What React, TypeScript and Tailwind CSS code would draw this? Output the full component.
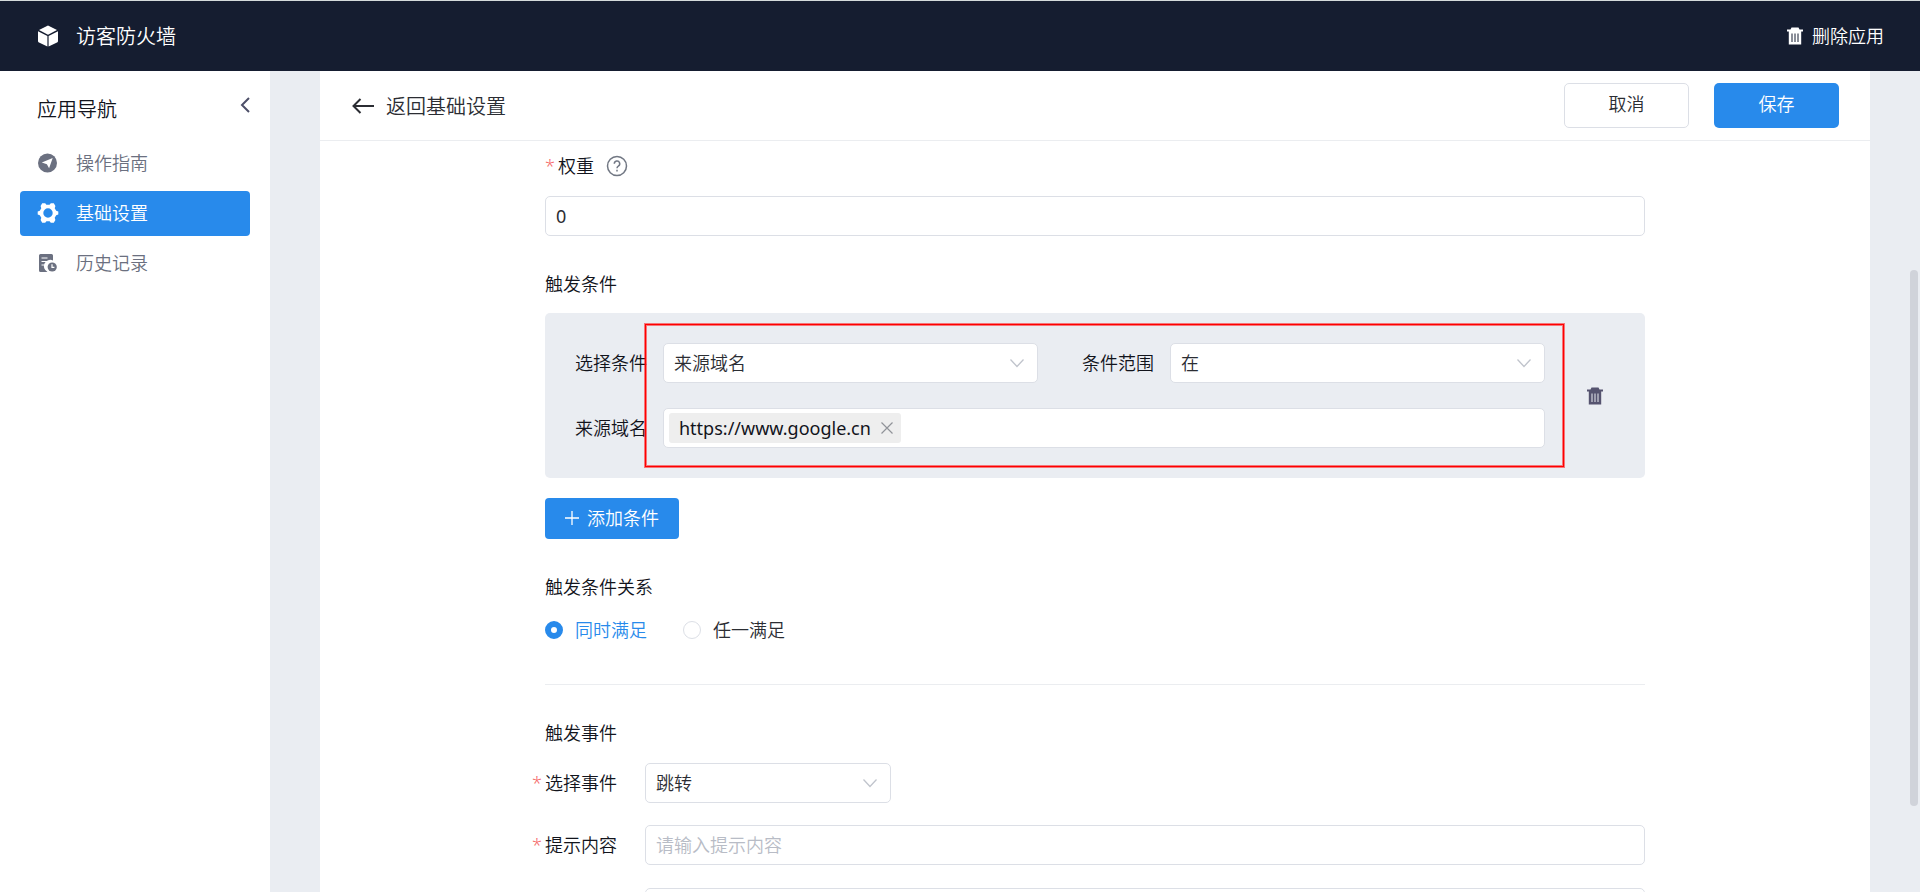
import type { ReactNode, SVGProps } from "react";

function CubeIcon() {
  return (
    <svg viewBox="0 0 20 22" className="h-[22px] w-5" fill="currentColor" aria-hidden="true">
      <path d="M10 0.4 19 5 10 9.7 1 5z" />
      <path d="M0 6.2 9.400 11V21.600L1 17.400Q0 16.900 0 15.900z" />
      <path d="M20 6.2 10.600 11V21.600L19 17.400Q20 16.900 20 15.900z" />
    </svg>
  );
}

function TrashIcon(props: SVGProps<SVGSVGElement>) {
  return (
    <svg viewBox="0 0 18 18" width="18" height="18" aria-hidden="true" {...props}>
      <path fill="currentColor" d="M5.5 0.5h7l1 2H17v2h-1.8V17.5H2.8V4.500H1v-2h3.500z" />
      <path stroke="var(--slot)" strokeWidth="1" d="M6 6.500v8.500M9 6.500v8.500M12 6.500v8.500" />
    </svg>
  );
}

function GuideIcon() {
  return (
    <svg viewBox="0 0 20 20" width="20" height="20" aria-hidden="true">
      <circle cx="10.500" cy="10" r="9.500" fill="currentColor" />
      <path fill="#fff" d="M15.700 4.900 12.100 15.300 9.900 11.200 4.800 9.600z" />
    </svg>
  );
}

function GearIcon() {
  return (
    <svg viewBox="0 0 22 22" width="22" height="22" aria-hidden="true">
      <path
        fill="currentColor"
        fillRule="evenodd"
        d="M5.200 1.200h3l1.200 1.600h3.200l1.200-1.600h3l1.600 2.800-0.700 2.200 1.500 2.500 2.100 0.800v3l-2.100 0.800-1.500 2.500 0.700 2.200-1.600 2.800h-3l-1.200-1.600H9.400l-1.200 1.600h-3l-1.600-2.800 0.700-2.200-1.500-2.500-2.100-0.800v-3l2.100-0.800 1.500-2.500L3.600 4zM11 6.300a4.700 4.700 0 1 0 0 9.400a4.700 4.700 0 0 0 0-9.400z"
      />
    </svg>
  );
}

function HistoryIcon() {
  return (
    <svg viewBox="0 0 20 20" width="20" height="20" aria-hidden="true">
      <path fill="currentColor" d="M3.500 1h11q1.500 0 1.500 1.500V7.500A6 6 0 0 0 10.500 19H3.500Q2 19 2 17.500v-15Q2 1 3.500 1z" />
      <path stroke="#fff" strokeWidth="1.200" d="M4.500 5h6M4.500 8.500h8M4.500 12h4" />
      <circle cx="15.200" cy="14" r="4.600" fill="currentColor" />
      <path stroke="#fff" strokeWidth="1.200" fill="none" d="M15 11.200v3.200h2.400" />
    </svg>
  );
}

function Chevron() {
  return (
    <svg
      viewBox="0 0 16 10"
      className="pointer-events-none col-start-1 row-start-1 mr-[13px] h-2.5 w-4 self-center justify-self-end"
      fill="none"
      stroke="#c0c4cc"
      strokeWidth="1.300"
      aria-hidden="true"
    >
      <path d="M1.500 1.500 8 8.500l6.500-7" />
    </svg>
  );
}

function SelectBox({ id, value, className }: { id: string; value: string; className: string }) {
  return (
    <div className={`grid ${className}`}>
      <select
        id={id}
        defaultValue={value}
        className="col-start-1 row-start-1 h-10 w-full appearance-none rounded-[5px] border border-[#dcdfe6] bg-white px-2.5 text-[#2b2d33] outline-none"
      >
        <option>{value}</option>
      </select>
      <Chevron />
    </div>
  );
}

function NavItem({ icon, label, active }: { icon: ReactNode; label: string; active?: boolean }) {
  return (
    <a
      href="#"
      className={
        active
          ? "flex h-[45px] items-center rounded-[4px] bg-[#288aeb] pl-[17px] pb-0.5 text-white"
          : "flex h-[45px] items-center rounded-[4px] pl-[17px] pb-0.5 text-[#6b7080]"
      }
    >
      <span className="w-[39px]">{icon}</span>
      {label}
    </a>
  );
}

function Star() {
  return <span className="w-[13px] shrink-0 text-[#f56c6c]">*</span>;
}

export default function App() {
  return (
    <div className="flex h-screen flex-col overflow-hidden bg-[#eaedf2] font-['Noto_Sans','Noto_Sans_CJK_SC',sans-serif] text-[18px] leading-6 font-[350] text-[#12141c]">
      <header className="flex h-[71px] shrink-0 items-center border-t border-[#d5dbdb] bg-[#151d30] pr-9 pl-[38px] text-white">
        <CubeIcon />
        <h1 className="ml-[18px] pt-0.5 text-[20px] font-[350]">访客防火墙</h1>
        <button type="button" className="ml-auto flex items-center gap-2">
          <TrashIcon className="[--slot:#151d30]" />
          删除应用
        </button>
      </header>

      <div className="flex min-h-0 flex-1">
        <aside className="w-[270px] shrink-0 bg-white px-5">
          <div className="flex h-[70px] items-center justify-between pt-1 pl-[17px]">
            <h2 className="pt-[3px] text-[20px] font-[350]">应用导航</h2>
            <button type="button" aria-label="收起" className="pb-1.5">
              <svg viewBox="0 0 10 16" width="10" height="16" fill="none" stroke="#4d4f68" strokeWidth="2" aria-hidden="true">
                <path d="M9 1 2 8l7 7" />
              </svg>
            </button>
          </div>
          <nav className="flex flex-col gap-[5px]">
            <NavItem icon={<GuideIcon />} label="操作指南" />
            <NavItem icon={<GearIcon />} label="基础设置" active />
            <NavItem icon={<HistoryIcon />} label="历史记录" />
          </nav>
        </aside>

        <main className="mr-[50px] ml-[50px] flex min-w-0 flex-1 flex-col bg-white">
          <div className="flex h-[70px] shrink-0 items-center border-b border-[#ebedf0] pr-[31px] pl-8">
            <a href="#" className="flex items-center gap-3 text-[20px] text-[#2b2d33]">
              <svg viewBox="0 0 22 16" width="22" height="16" fill="none" stroke="currentColor" strokeWidth="2" aria-hidden="true">
                <path d="M8.500 1 1.500 8l7 7M1.500 8H22" />
              </svg>
              <span className="pt-0.5">返回基础设置</span>
            </a>
            <div className="ml-auto flex gap-[25px]">
              <button type="button" className="h-[45px] w-[125px] rounded-[5px] border border-[#dcdfe6] bg-white pb-1 text-[#2b2d33]">
                取消
              </button>
              <button type="button" className="h-[45px] w-[125px] rounded-[5px] bg-[#288aeb] pb-1 text-white">
                保存
              </button>
            </div>
          </div>

          <div className="min-h-0 flex-1 overflow-hidden">
            <form className="mx-auto max-w-[1100px] pt-[13px]">
              <div className="flex h-6 items-center">
                <Star />
                <label htmlFor="weight">权重</label>
                <svg viewBox="0 0 22 22" width="22" height="22" className="ml-3" fill="none" stroke="#717783" strokeWidth="1.500" aria-hidden="true">
                  <circle cx="11" cy="11" r="9.500" />
                  <path d="M8.300 8.800a2.700 2.700 0 1 1 4 2.300q-1.300 0.700-1.300 2.200M11 14.800v1.700" />
                </svg>
              </div>
              <input
                id="weight"
                defaultValue="0"
                className="mt-[18px] block h-10 w-full rounded-[5px] border border-[#dcdfe6] px-2.5 font-normal text-[#2b2d33] outline-none"
              />

              <h3 className="mt-9 font-[350]">触发条件</h3>
              <div className="relative mt-[17px] flex rounded-[5px] bg-[#eaedf2] py-[30px] pl-[30px]">
                <div className="flex flex-1 flex-col gap-[25px]">
                  <div className="flex items-center">
                    <label htmlFor="condition" className="w-[88px] shrink-0">选择条件</label>
                    <SelectBox id="condition" value="来源域名" className="flex-1" />
                    <label htmlFor="range" className="ml-11 w-[88px] shrink-0">条件范围</label>
                    <SelectBox id="range" value="在" className="flex-1" />
                  </div>
                  <div className="flex items-center">
                    <label htmlFor="domain" className="w-[88px] shrink-0">来源域名</label>
                    <div className="flex h-10 flex-1 items-center rounded-[5px] border border-[#dcdfe6] bg-white px-[5px]">
                      <span className="flex h-[30px] items-center gap-2.5 rounded-[3px] bg-[#eeeeee] pr-2 pl-2.5 font-normal">
                        https://www.google.cn
                        <button type="button" aria-label="移除">
                          <svg viewBox="0 0 12 12" width="12" height="12" stroke="#909399" strokeWidth="1.200" aria-hidden="true">
                            <path d="M0.500 0.500l11 11M11.500 0.500l-11 11" />
                          </svg>
                        </button>
                      </span>
                      <input id="domain" className="ml-2 h-8 min-w-0 flex-1 outline-none" />
                    </div>
                  </div>
                </div>
                <button type="button" aria-label="删除条件" className="flex w-[100px] items-center justify-center text-[#55536f]">
                  <TrashIcon className="[--slot:#eaedf2]" />
                </button>
                <div className="pointer-events-none absolute inset-y-[11px] right-[81px] left-[100px] border border-[#ff0000] shadow-[0_0_0_1px_rgba(255,0,0,0.5),inset_0_0_0_1px_rgba(255,0,0,0.5)]" />
              </div>

              <button type="button" className="mt-5 flex h-[41px] w-[134px] items-center justify-center gap-2 rounded-[4px] bg-[#288aeb] pb-0.5 text-white">
                <svg viewBox="0 0 14 14" width="14" height="14" stroke="currentColor" strokeWidth="1.300" aria-hidden="true">
                  <path d="M7 0v14M0 7h14" />
                </svg>
                添加条件
              </button>

              <fieldset>
                <legend className="pt-9">触发条件关系</legend>
                <div className="mt-[19px] flex gap-9">
                  <label className="flex items-center gap-3 text-[#288aeb]">
                    <input
                      type="radio"
                      name="relation"
                      defaultChecked
                      className="size-[18px] appearance-none rounded-full border border-[#dcdfe6] bg-white checked:border-[6px] checked:border-[#288aeb]"
                    />
                    同时满足
                  </label>
                  <label className="flex items-center gap-3 text-[#2b2d33]">
                    <input
                      type="radio"
                      name="relation"
                      className="size-[18px] appearance-none rounded-full border border-[#dcdfe6] bg-white checked:border-[6px] checked:border-[#288aeb]"
                    />
                    任一满足
                  </label>
                </div>
              </fieldset>

              <hr className="mt-[42px] border-[#ebedf0]" />

              <h3 className="mt-9 font-[350]">触发事件</h3>
              <div className="mt-[18px] -ml-[13px] flex items-center">
                <Star />
                <label htmlFor="event" className="w-[100px] shrink-0">选择事件</label>
                <SelectBox id="event" value="跳转" className="w-[246px]" />
              </div>
              <div className="mt-[22px] -ml-[13px] flex items-center">
                <Star />
                <label htmlFor="tip" className="w-[100px] shrink-0">提示内容</label>
                <input
                  id="tip"
                  placeholder="请输入提示内容"
                  className="h-10 min-w-0 flex-1 rounded-[5px] border border-[#dcdfe6] px-2.5 outline-none placeholder:text-[#b8bcc6]"
                />
              </div>
              <div className="mt-[23px] flex pl-[100px]">
                <input aria-label="跳转地址" className="h-10 min-w-0 flex-1 rounded-[5px] border border-[#dcdfe6] px-2.5 outline-none" />
              </div>
            </form>
          </div>
        </main>
      </div>

      <div className="absolute top-[270px] right-0.5 h-[536px] w-2 rounded-full bg-[#d0d3da]" />
    </div>
  );
}
